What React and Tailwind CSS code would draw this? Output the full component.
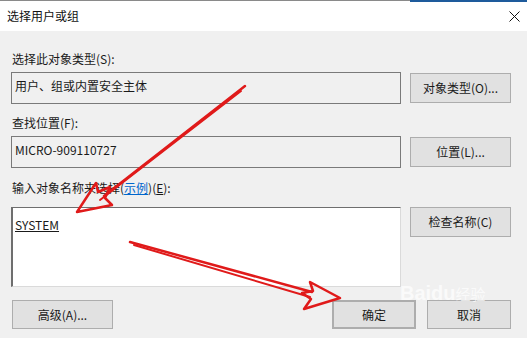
import React from 'react';

const font = { fontFamily: '"Noto Sans CJK SC", "Noto Sans", sans-serif' };

const Btn = ({ children, className = '' }) => (
  <button
    className={`flex items-center justify-center bg-[#e1e1e1] border border-[#adadad] text-[12px] text-[#1a1a1a] ${className}`}
  >
    {children}
  </button>
);

const Arrows = () => (
  <svg className="absolute inset-0 pointer-events-none" width="527" height="338" viewBox="0 0 527 338">
    <g fill="none" stroke="#e01a1a" strokeLinejoin="round" strokeLinecap="round">
      {/* arrow to SYSTEM field */}
      <path d="M245 86 L104 196" strokeWidth="2.5" />
      <path d="M241 91 L100 200" strokeWidth="2" />
      <path d="M77 212 L96 183 L98 192 L110 187 L105 198 L112 205 Z" strokeWidth="2.5" />
      {/* arrow to OK button */}
      <path d="M130 242 L312 292" strokeWidth="2.5" />
      <path d="M134 245 L310 297" strokeWidth="2" />
      <path d="M340 298 L310 282 L313 291 L302 293 L311 299 L304 309 Z" strokeWidth="2.5" />
    </g>
  </svg>
);

export default function App() {
  return (
    <div className="relative w-[527px] h-[338px] overflow-hidden bg-[#f0f0f0]" style={font}>
      {/* title bar */}
      <div className="relative h-[31px] bg-white border-t border-[#8a8a8a] flex items-center pl-[7px]">
        <div className="absolute top-[-1px] left-[410px] right-0 h-[2px] bg-[#1e5b9c]" />
        <span className="text-[12px] text-[#111]">选择用户或组</span>
        <svg className="absolute left-[509px] top-[10px]" width="11" height="11" viewBox="0 0 11 11">
          <path d="M0.5 0.5 L10.5 10.5 M10.5 0.5 L0.5 10.5" stroke="#111" strokeWidth="1" />
        </svg>
      </div>

      <div className="pl-[11px] pr-[16px] text-[12px] text-[#1a1a1a]">
        <div className="mt-[19px] h-[17px] leading-[17px] pl-[1px]">选择此对象类型(S):</div>
        <div className="mt-[5px] flex gap-[9px]">
          <div className="w-[390px] h-[32px] border border-[#7a7a7a] px-[3px] pt-[4px] leading-[17px]">用户、组或内置安全主体</div>
          <Btn className="w-[101px] h-[30px] mt-[1px]">对象类型(O)...</Btn>
        </div>

        <div className="mt-[10px] h-[17px] leading-[17px] pl-[1px]">查找位置(F):</div>
        <div className="mt-[5px] flex gap-[9px]">
          <div className="w-[390px] h-[32px] border border-[#7a7a7a] px-[3px] pt-[4px] leading-[17px]">MICRO-909110727</div>
          <Btn className="w-[101px] h-[30px] mt-[1px]">位置(L)...</Btn>
        </div>

        <div className="mt-[11px] h-[17px] leading-[17px] pl-[1px]">
          输入对象名称来选择(<span className="text-[#0066cc] underline">示例</span>)(<span className="underline">E</span>):
        </div>
        <div className="mt-[11px] flex gap-[9px]">
          <div className="w-[390px] h-[80px] bg-white border-t border-l-2 border-[#6e6e6e] border-r border-b border-r-[#dadada] border-b-[#dadada] px-[2px] pt-[8px] leading-[17px]">
            <span className="underline">SYSTEM</span>
          </div>
          <Btn className="w-[101px] h-[30px]">检查名称(C)</Btn>
        </div>

        <div className="mt-[13px] flex">
          <Btn className="w-[101px] h-[29px] ml-[1px]">高级(A)...</Btn>
          <Btn className="w-[84px] h-[29px] ml-[219px] border-2 border-[#1c76c4]">确定</Btn>
          <Btn className="w-[84px] h-[29px] ml-[11px]">取消</Btn>
        </div>
      </div>

      {/* watermark */}
      <div className="absolute left-[400px] top-[283px] text-white/70 font-bold text-[20px] leading-none pointer-events-none" style={{ fontFamily: '"Liberation Sans", sans-serif' }}>
        Baidu<span className="text-[15px] font-normal" style={font}>经验</span>
      </div>

      <Arrows />
    </div>
  );
}
